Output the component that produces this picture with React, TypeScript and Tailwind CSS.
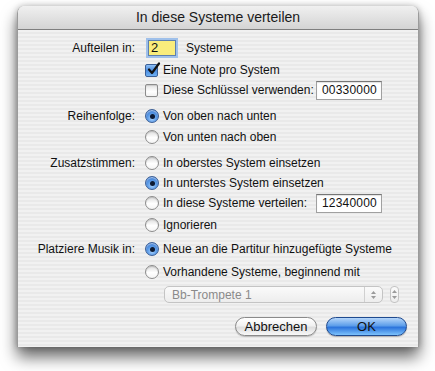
import React from "react";

function Radio({ on }: { on?: boolean }) {
  return on ? (
    <div className="relative flex h-[14px] w-[14px] shrink-0 items-center justify-center rounded-full border border-[#3b5f96] bg-[radial-gradient(circle_at_50%_70%,#a9d2ff_0%,#5a9ae6_45%,#2a66c4_100%)] shadow-[inset_0_1px_1px_rgba(255,255,255,0.6)]">
      <div className="h-[5px] w-[5px] rounded-full bg-[#0d1a33]" />
    </div>
  ) : (
    <div className="h-[14px] w-[14px] shrink-0 rounded-full border border-[#8c8c8c] bg-[linear-gradient(to_bottom,#dcdcdc_0%,#ffffff_55%,#f4f4f4_100%)] shadow-[inset_0_1px_1px_rgba(0,0,0,0.15)]" />
  );
}

function Check({ on }: { on?: boolean }) {
  return on ? (
    <div className="relative h-[13px] w-[13px] shrink-0 rounded-[2px] border border-[#3b5f96] bg-[linear-gradient(to_bottom,#8ec0f5_0%,#4a8ce0_50%,#6fb0f3_100%)]">
      <svg className="absolute left-[1px] top-[-3px]" width="14" height="14" viewBox="0 0 14 14">
        <path d="M2 7.5 L5 11 L12 1.5" fill="none" stroke="#111" strokeWidth="2.2" strokeLinecap="round" strokeLinejoin="round" />
      </svg>
    </div>
  ) : (
    <div className="h-[13px] w-[13px] shrink-0 rounded-[2px] border border-[#8c8c8c] bg-[linear-gradient(to_bottom,#e2e2e2_0%,#ffffff_60%,#f2f2f2_100%)] shadow-[inset_0_1px_1px_rgba(0,0,0,0.12)]" />
  );
}

function Row({ label, cls, children }: { label?: string; cls: string; children: React.ReactNode }) {
  return (
    <div className={"flex h-[20px] items-center " + cls}>
      <div className="w-[117px] text-right">{label}</div>
      <div className="ml-[10px] flex w-[237px] items-center">{children}</div>
    </div>
  );
}

function Field({ value }: { value: string }) {
  return (
    <div className="ml-auto flex h-[19px] w-[66px] items-center border border-[#a0a0a0] border-t-[#767676] bg-white pl-[5px] text-[12px] tracking-[0.2px] shadow-[inset_0_1px_1px_rgba(0,0,0,0.12)]">
      {value}
    </div>
  );
}

export default function App() {
  return (
    <div className="h-[371px] w-[435px] bg-white pl-[17px] pt-[6px] font-['Liberation_Sans',Arial,sans-serif] text-[12px] text-[#111]">
      <div className="flex h-[341px] w-[402px] flex-col overflow-hidden rounded-t-[7px] border-x border-[#9b9b9b] shadow-[0_10px_16px_rgba(0,0,0,0.6),0_0_6px_rgba(0,0,0,0.25)]">
        <div className="flex h-[24px] shrink-0 items-center justify-center border-b border-[#7f7f7f] bg-[linear-gradient(to_bottom,#f0f0f0_0%,#e2e2e2_50%,#d4d4d4_100%)] text-[14px] text-[#1a1a1a]">
          In diese Systeme verteilen
        </div>
        <div className="flex flex-1 flex-col bg-[repeating-linear-gradient(to_bottom,#f1f1f1_0px,#f1f1f1_2px,#e9e9e9_2px,#e9e9e9_4px)]">
          <Row label="Aufteilen in:" cls="mt-[8px]">
            <div className="ml-[3px] flex h-[16px] w-[28px] items-center border border-[#5d7fae] bg-[#f9ec7c] pl-[2px] text-[13px] shadow-[0_0_0_2px_#9fc0ea]">
              2
            </div>
            <span className="ml-[10px]">Systeme</span>
          </Row>
          <Row cls="mt-[2px]">
            <Check on />
            <span className="ml-[5px]">Eine Note pro System</span>
          </Row>
          <Row cls="mt-0">
            <Check />
            <span className="ml-[5px]">Diese Schlüssel verwenden:</span>
            <Field value="00330000" />
          </Row>
          <Row label="Reihenfolge:" cls="mt-[6px]">
            <Radio on />
            <span className="ml-[4px]">Von oben nach unten</span>
          </Row>
          <Row cls="mt-[1px]">
            <Radio />
            <span className="ml-[4px]">Von unten nach oben</span>
          </Row>
          <Row label="Zusatzstimmen:" cls="mt-[6px]">
            <Radio />
            <span className="ml-[4px]">In oberstes System einsetzen</span>
          </Row>
          <Row cls="mt-0">
            <Radio on />
            <span className="ml-[4px]">In unterstes System einsetzen</span>
          </Row>
          <Row cls="mt-0">
            <Radio />
            <span className="ml-[4px]">In diese Systeme verteilen:</span>
            <Field value="12340000" />
          </Row>
          <Row cls="mt-[2px]">
            <Radio />
            <span className="ml-[4px]">Ignorieren</span>
          </Row>
          <Row label="Platziere Musik in:" cls="mt-[4px]">
            <Radio on />
            <span className="ml-[4px] whitespace-nowrap">Neue an die Partitur hinzugefügte Systeme</span>
          </Row>
          <Row cls="mt-[3px]">
            <Radio />
            <span className="ml-[4px]">Vorhandene Systeme, beginnend mit</span>
          </Row>
          <div className="ml-[146px] mt-[4px] flex items-center">
            <div className="flex h-[17px] w-[219px] items-center rounded-[5px] border border-[#c4c4c4] bg-[linear-gradient(to_bottom,#fafafa_0%,#ededed_100%)] text-[#8a8a8a]">
              <span className="flex-1 pl-[7px]">Bb-Trompete 1</span>
              <div className="flex h-full w-[18px] flex-col items-center justify-center gap-[2px] border-l border-[#d0d0d0]">
                <svg width="5" height="3" viewBox="0 0 5 3"><path d="M0 3 L2.5 0 L5 3Z" fill="#9a9a9a" /></svg>
                <svg width="5" height="3" viewBox="0 0 5 3"><path d="M0 0 L2.5 3 L5 0Z" fill="#9a9a9a" /></svg>
              </div>
            </div>
            <div className="ml-[7px] flex h-[17px] w-[9px] flex-col items-center justify-center gap-[3px] rounded-[4px] border border-[#c4c4c4] bg-[linear-gradient(to_bottom,#fafafa_0%,#ededed_100%)]">
              <svg width="5" height="3" viewBox="0 0 5 3"><path d="M0 3 L2.5 0 L5 3Z" fill="#9a9a9a" /></svg>
              <svg width="5" height="3" viewBox="0 0 5 3"><path d="M0 0 L2.5 3 L5 0Z" fill="#9a9a9a" /></svg>
            </div>
          </div>
          <div className="mt-[14px] flex justify-end gap-[9px] pr-[11px] text-[13px]">
            <div className="flex h-[19px] w-[82px] items-center justify-center rounded-full border border-[#8a8a8a] bg-[linear-gradient(to_bottom,#ffffff_0%,#f1f1f1_45%,#dedede_55%,#f8f8f8_100%)] shadow-[0_1px_1px_rgba(0,0,0,0.2)]">
              Abbrechen
            </div>
            <div className="flex h-[19px] w-[81px] items-center justify-center rounded-full border border-[#1f4a8f] bg-[linear-gradient(to_bottom,#b5d6fa_0%,#5d9eea_45%,#2c74dc_55%,#7cc2fc_100%)] shadow-[0_1px_1px_rgba(0,0,0,0.25)]">
              OK
            </div>
          </div>
        </div>
      </div>
    </div>
  );
}
